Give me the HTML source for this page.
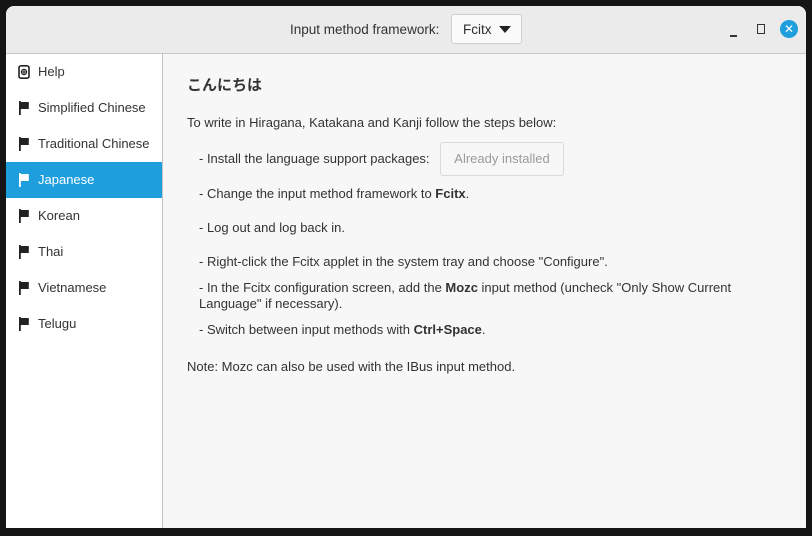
<!DOCTYPE html><html><head><style>
body{margin:0;width:812px;height:536px;background:#151515;font-family:"Liberation Sans","Noto Sans CJK JP",sans-serif;font-size:13px;color:#2e2e2e;position:relative;overflow:hidden}
.win{position:absolute;left:6px;top:6px;width:800px;height:522px;background:#f7f7f7;border-radius:8px 8px 0 0;overflow:hidden}
.hdr{position:absolute;left:0;top:0;width:800px;height:47px;background:#ebebeb;border-bottom:1px solid #c8c8c8}
.side{position:absolute;left:0;top:48px;width:156px;height:474px;background:#fff;border-right:1px solid #c4c4c4}
.item{height:36px;line-height:36px;padding-left:32px;position:relative;font-size:13px;color:#333}
.item.sel{background:#1f9ede;color:#fff}
.flag{position:absolute;left:12px;top:11px;width:12px;height:14px}
.c{position:absolute;left:181px;font-size:13px;color:#333}
b{font-weight:bold}
</style></head><body>
<div class="win">
<div class="hdr">
<span style="position:absolute;left:284px;top:16px;font-size:13.5px;color:#333">Input method framework:</span>
<div style="position:absolute;left:445px;top:8px;width:69px;height:28px;border:1px solid #cfcfcf;border-radius:3px;background:#fafafa"><span style="position:absolute;left:11px;top:7px;font-size:13.5px">Fcitx</span><svg style="position:absolute;left:47px;top:11px" width="12" height="8"><path d="M0 0h12L6 7z" fill="#222"/></svg></div>
<div style="position:absolute;left:724px;top:29px;width:7px;height:1.5px;background:#333"></div>
<div style="position:absolute;left:751px;top:18px;width:6px;height:8px;border:1.5px solid #333"></div>
<div style="position:absolute;left:774px;top:14px;width:18px;height:18px;border-radius:50%;background:#1f9ede;color:#fff;font-size:12px;line-height:18px;text-align:center">✕</div>
</div>
<div class="side">
<div class="item"><svg class="flag" viewBox="0 0 12 14"><rect x="1" y="0.8" width="10" height="12.4" rx="2" fill="none" stroke="#222" stroke-width="1.6"/><circle cx="6" cy="7" r="2.6" fill="none" stroke="#222" stroke-width="1.2"/><path d="M6 4.4v5.2M3.4 7h5.2" stroke="#222" stroke-width="1"/></svg>Help</div>
<div class="item"><svg class="flag" viewBox="0 0 12 14"><path d="M1 0h1.8v14H1zM2.8 1h8v7h-8z" fill="#222"/></svg>Simplified Chinese</div>
<div class="item"><svg class="flag" viewBox="0 0 12 14"><path d="M1 0h1.8v14H1zM2.8 1h8v7h-8z" fill="#222"/></svg>Traditional Chinese</div>
<div class="item sel"><svg class="flag" viewBox="0 0 12 14"><path d="M1 0h1.8v14H1zM2.8 1h8v7h-8z" fill="#fff"/></svg>Japanese</div>
<div class="item"><svg class="flag" viewBox="0 0 12 14"><path d="M1 0h1.8v14H1zM2.8 1h8v7h-8z" fill="#222"/></svg>Korean</div>
<div class="item"><svg class="flag" viewBox="0 0 12 14"><path d="M1 0h1.8v14H1zM2.8 1h8v7h-8z" fill="#222"/></svg>Thai</div>
<div class="item"><svg class="flag" viewBox="0 0 12 14"><path d="M1 0h1.8v14H1zM2.8 1h8v7h-8z" fill="#222"/></svg>Vietnamese</div>
<div class="item"><svg class="flag" viewBox="0 0 12 14"><path d="M1 0h1.8v14H1zM2.8 1h8v7h-8z" fill="#222"/></svg>Telugu</div>
</div>
<div class="c" style="top:68px;font-size:15px;font-weight:bold">こんにちは</div>
<div class="c" style="top:109px">To write in Hiragana, Katakana and Kanji follow the steps below:</div>
<div class="c" style="left:193px;top:145px">- Install the language support packages:</div>
<div style="position:absolute;left:434px;top:136px;width:122px;height:32px;border:1px solid #dadada;border-radius:3px;background:#f7f7f7;color:#9a9a9a;text-align:center;line-height:32px">Already installed</div>
<div class="c" style="left:193px;top:180px">- Change the input method framework to <b>Fcitx</b>.</div>
<div class="c" style="left:193px;top:214px">- Log out and log back in.</div>
<div class="c" style="left:193px;top:248px">- Right-click the Fcitx applet in the system tray and choose "Configure".</div>
<div class="c" style="left:193px;top:274px;width:570px;line-height:16px">- In the Fcitx configuration screen, add the <b>Mozc</b> input method (uncheck "Only Show Current Language" if necessary).</div>
<div class="c" style="left:193px;top:316px">- Switch between input methods with <b>Ctrl+Space</b>.</div>
<div class="c" style="top:353px">Note: Mozc can also be used with the IBus input method.</div>
</div>
</body></html>
